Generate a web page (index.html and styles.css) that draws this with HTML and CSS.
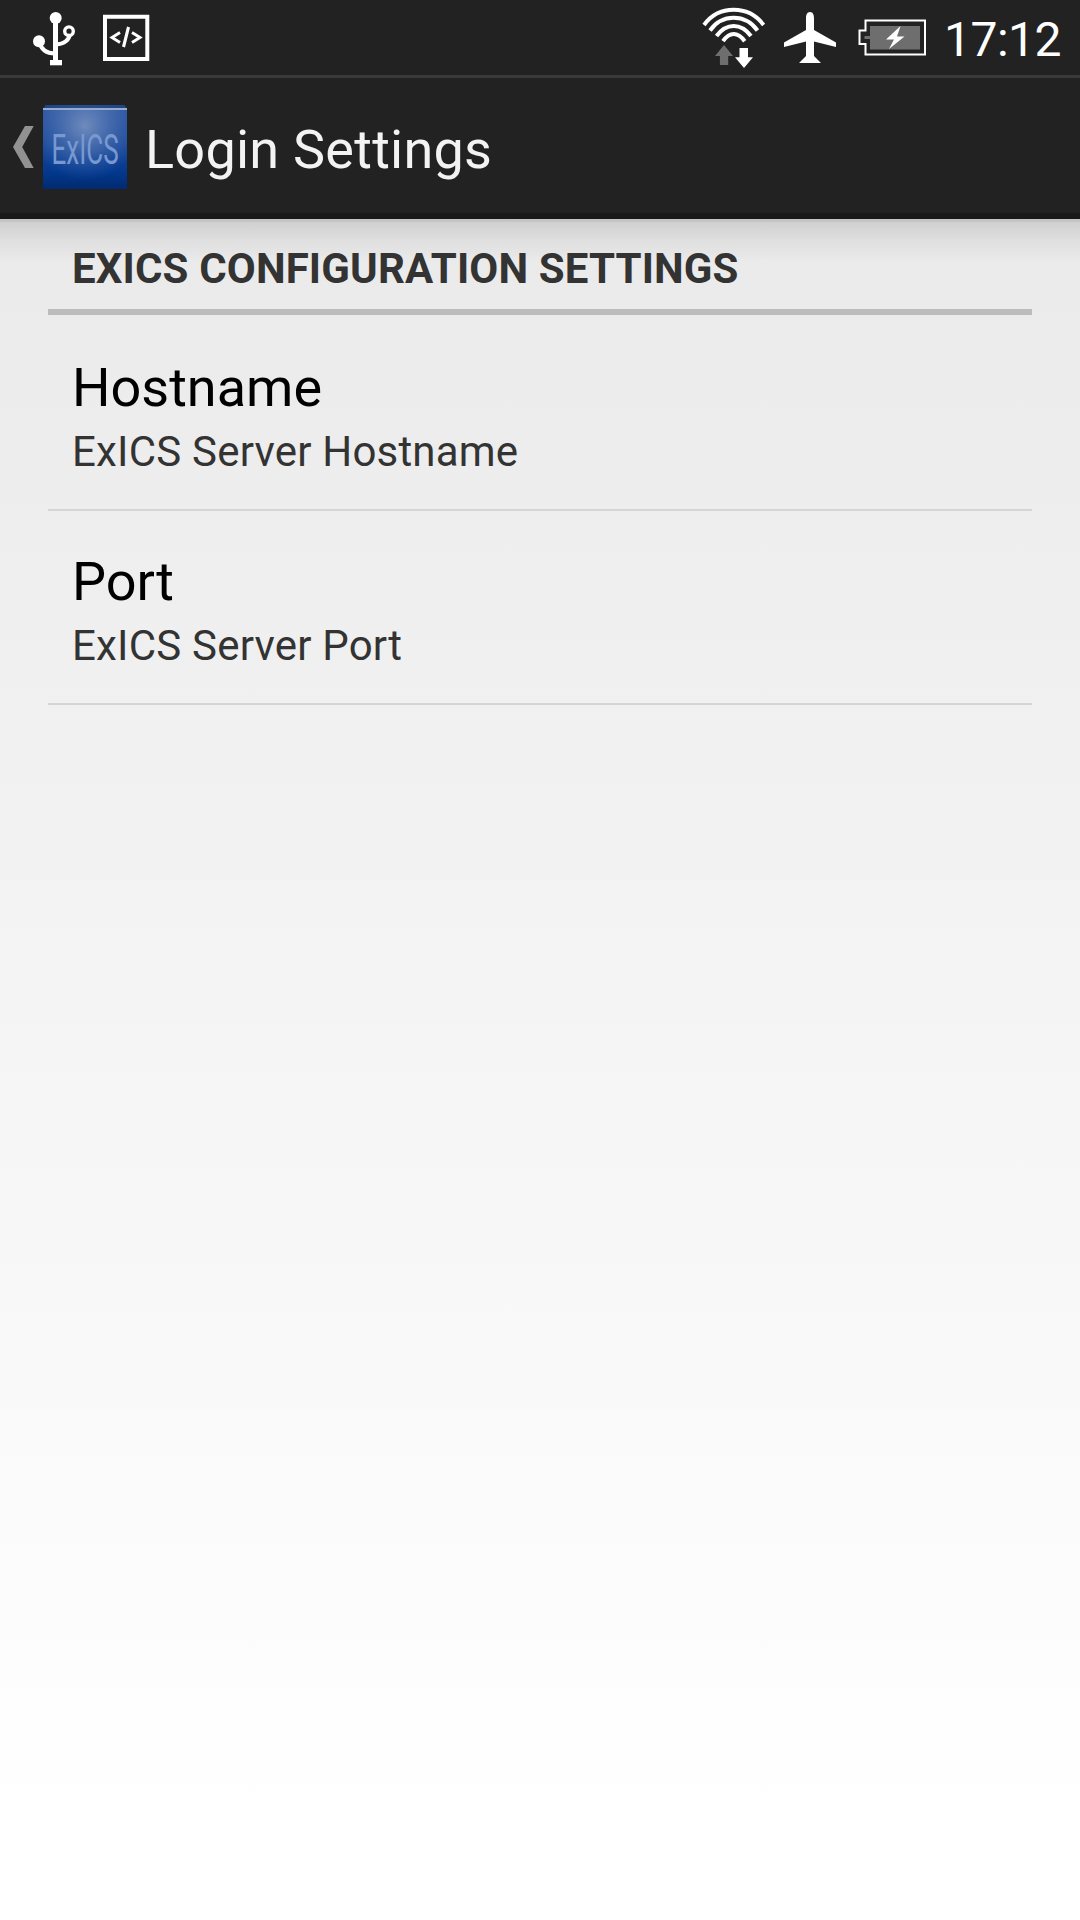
FILE: index.html
```html
<!DOCTYPE html>
<html lang="en">
<head>
<meta charset="utf-8">
<title>Login Settings</title>
<link rel="stylesheet" href="styles.css">
</head>
<body>
<div class="status-bar">
  <svg class="usb" width="44" height="56" viewBox="32 10 44 56">
    <g fill="none" stroke="#fff">
      <path d="M55.5 18V62" stroke-width="5"/>
      <path d="M39.5 42Q42 53.500 55 53.500" stroke-width="4"/>
      <path d="M56 44.500Q68.500 43.500 70 34" stroke-width="4"/>
      <circle cx="69" cy="31.200" r="4.300" stroke-width="3.400"/>
    </g>
    <path d="M50 60h12v5.300H50z" fill="#fff"/>
    <circle cx="55.700" cy="18" r="6" fill="#fff"/>
    <circle cx="39" cy="41.200" r="6" fill="#fff"/>
  </svg>
  <svg class="code" width="48" height="48" viewBox="102 14 48 48" fill="none" stroke="#fff">
    <path d="M105 16.800h42.300v42.200H105z" stroke-width="4"/>
    <path d="M120 32.500l-8 5 8 5M132 32.500l8 5-8 5" stroke-width="2.900"/>
    <path d="M128.500 27l-5 20" stroke-width="3.100"/>
  </svg>
  <svg class="wifi" width="64" height="62" viewBox="702 7 64 62">
    <g fill="none" stroke="#fff" stroke-width="4">
      <path d="M704 25Q715 9.800 733.700 9.800T763.600 25"/>
      <path d="M710 30.500Q719 17.800 733.700 17.800T757.500 30.500"/>
      <path d="M716.500 36Q724 26 733.700 26T751 36"/>
      <path d="M723 41.200Q728 34 733.700 34T744.700 41.200"/>
    </g>
    <path d="M724 45l9 11h-4.800v9h-8.300v-9H715z" fill="#6e6e6e"/>
    <path d="M739.500 48h8.500v9.300h5L744 68l-9-10.700h4.500z" fill="#fff"/>
  </svg>
  <svg class="plane" width="54" height="54" viewBox="783 11 54 54" fill="#fff">
    <path d="M810 12c3 0 4 3 4 6v12l22 12.500v4.500l-22-5.500V56l7 7H799l7-7V41.500L784 47v-4.500L806 30V18c0-3 1-6 4-6z"/>
  </svg>
  <svg class="battery" width="68" height="38" viewBox="858 19 68 38">
    <path d="M865.500 20.500h59.500v34h-59.500v-10.500h-6v-13.500h6z" fill="none" stroke="#fff" stroke-width="2"/>
    <path d="M870 26h50v23.500h-50V39h-5.500v-3h5.500z" fill="#6e6e6e"/>
    <path d="M900.500 26L886 39.500h8L889 49l15.500-12.500h-7.500z" fill="#fff"/>
  </svg>
  <div class="clock">17:12</div>
</div>
<div class="action-bar">
  <svg class="back" width="21" height="42" viewBox="0 0 21 42"><path d="M12 0h8.700L9.200 21l11.500 21H12L0 21z" fill="#929292"/></svg>
  <svg class="app" width="84" height="85" viewBox="0 0 84 85">
    <defs>
      <linearGradient id="base" x1="0" y1="0" x2="0" y2="1">
        <stop offset="0" stop-color="#2a55a3"/><stop offset=".45" stop-color="#1b4a9c"/><stop offset=".8" stop-color="#03388e"/><stop offset="1" stop-color="#012a70"/>
      </linearGradient>
      <radialGradient id="glow" cx=".5" cy=".25" r=".65">
        <stop offset="0" stop-color="#a3b3d0" stop-opacity=".6"/><stop offset="1" stop-color="#6c8bc0" stop-opacity="0"/>
      </radialGradient>
    </defs>
    <path d="M3 0H81L84 4V84H0V4z" fill="url(#base)"/>
    <path d="M3 0H81L84 4V84H0V4z" fill="url(#glow)"/>
    <path d="M3 0H81L84 4H0z" fill="#173c7a" opacity=".7"/>
    <path d="M0 4H84" stroke="#96abd0" stroke-width="2"/>
    <text class="app-name" transform="translate(8.500 59) scale(.62 1)">ExICS</text>
  </svg>
  <h1 class="title">Login Settings</h1>
</div>
<main class="content">
  <h2 class="section">EXICS CONFIGURATION SETTINGS</h2>
  <div class="row">
    <div class="name">Hostname</div>
    <div class="summary">ExICS Server Hostname</div>
  </div>
  <div class="row">
    <div class="name">Port</div>
    <div class="summary">ExICS Server Port</div>
  </div>
</main>
</body>
</html>
```
FILE: styles.css
```css
* { box-sizing: border-box; }
body {
  margin: 0;
  height: 1920px;
  display: flex;
  flex-direction: column;
  font-family: Roboto, sans-serif;
  background: #fff;
  overflow: hidden;
}
svg { display: block; flex: none; }
.status-bar {
  height: 78px;
  flex: none;
  display: flex;
  align-items: flex-start;
  background: #222;
  border-bottom: 3px solid #3a3a3a;
  color: #fff;
}
.usb { margin: 10px 0 0 32px; }
.code { margin: 14px 0 0 26px; }
.wifi { margin: 7px 0 0 auto; }
.plane { margin: 11px 0 0 17px; }
.battery { margin: 19px 0 0 21px; }
.clock {
  width: 154px;
  padding-left: 18px;
  font-size: 48px;
  letter-spacing: -.5px;
  line-height: 56px;
  margin-top: 12px;
  white-space: nowrap;
}
.action-bar {
  height: 141px;
  flex: none;
  display: flex;
  align-items: flex-start;
  background: #222;
  border-bottom: 6px solid #1a1a1a;
}
.back { margin: 48px 0 0 13px; }
.app { margin: 27px 0 0 9px; }
.app-name { font-size: 42px; font-weight: 400; fill: #7799d0; }
.title {
  margin: 40px 0 0 18px;
  color: #f3f3f3;
  font-size: 54px;
  font-weight: 400;
  letter-spacing: .25px;
  line-height: 64px;
  white-space: nowrap;
}
.content {
  flex: 1;
  padding: 0 48px;
  background:
    linear-gradient(rgba(0, 0, 0, .16), rgba(0, 0, 0, .16)) 0 0 / 100% 3px no-repeat,
    linear-gradient(rgba(0, 0, 0, .11), rgba(0, 0, 0, .05) 45%, transparent) 0 3px / 100% 40px no-repeat,
    linear-gradient(#eaeaea, #fff 1600px);
}
.section {
  margin: 0;
  height: 96px;
  padding: 25px 24px 0;
  border-bottom: 6px solid #bcbcbc;
  color: #333;
  font-size: 42px;
  font-weight: 700;
  letter-spacing: .14px;
  line-height: 50px;
  white-space: nowrap;
}
.row {
  height: 194px;
  padding: 39px 24px 0;
  border-bottom: 2px solid #d4d5d5;
}
.section + .row { height: 196px; padding-top: 41px; }
.name { color: #000; font-size: 54px; line-height: 64px; }
.summary {
  margin-top: 7px;
  color: #333;
  font-size: 42px;
  letter-spacing: .2px;
  line-height: 50px;
}
```
